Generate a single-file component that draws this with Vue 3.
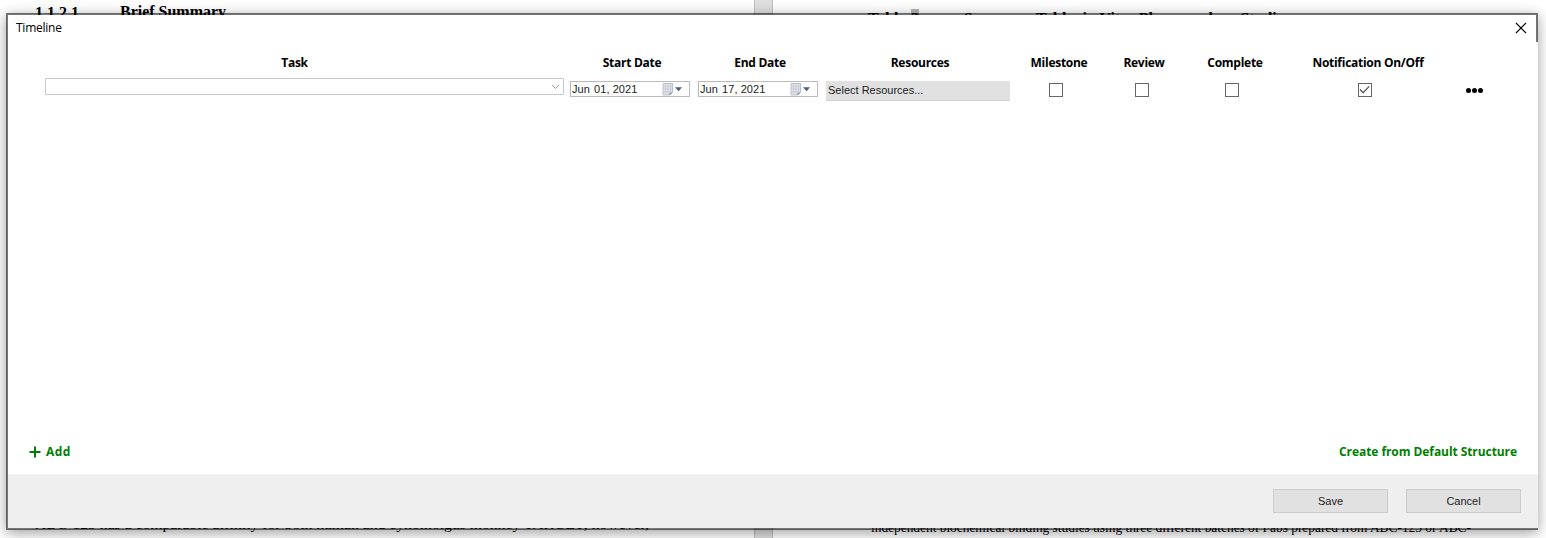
<script setup>
const columns = ['Task', 'Start Date', 'End Date', 'Resources', 'Milestone', 'Review', 'Complete', 'Notification On/Off']
const dates = [
  { month: 'Jun', rest: '01, 2021' },
  { month: 'Jun', rest: '17, 2021' },
]
const flags = [
  { name: 'milestone', on: false },
  { name: 'review', on: false },
  { name: 'complete', on: false },
  { name: 'notify', on: true },
]
</script>

<template>
  <div class="screen">
    <div class="page left">
      <div class="heading"><span class="num">1.1.2.1</span><svg class="fit" width="108" height="22"><text x="0" y="16" textLength="106" lengthAdjust="spacingAndGlyphs">Brief Summary</text></svg></div>
      <svg class="para" width="640" height="20"><text x="0" y="14" textLength="614" lengthAdjust="spacingAndGlyphs">ABC-123 has a comparable affinity for both human and cynomolgus monkey TARGET; however,</text></svg>
    </div>
    <div class="gap"></div>
    <div class="page right">
      <div class="caption"><span class="c1">Table</span><span class="mark">2</span><svg class="fit" width="330" height="22"><text x="0" y="16" textLength="64" lengthAdjust="spacingAndGlyphs">Summary</text><text x="72" y="16" textLength="254" lengthAdjust="spacingAndGlyphs">Table: in Vitro Pharmacology Studies</text></svg></div>
      <svg class="para" width="640" height="20"><text x="0" y="14" textLength="600" lengthAdjust="spacingAndGlyphs">independent biochemical binding studies using three different batches of Fabs prepared from ABC-123 or ABC-</text></svg>
    </div>

    <div class="dialog">
      <div class="titlebar">
        <span>Timeline</span>
        <svg width="12" height="12" viewBox="0 0 12 12"><path d="M1 1L11 11M11 1L1 11" stroke="#000" stroke-width="1.1" fill="none" /></svg>
      </div>
      <div class="body">
        <div class="head">
          <div v-for="c in columns" :key="c">{{ c }}</div>
        </div>
        <div class="row">
          <div class="combo">
            <svg width="9" height="6" viewBox="0 0 9 6"><path d="M1 1L4.5 4.5L8 1" stroke="#999" fill="none" /></svg>
          </div>
          <div v-for="d in dates" :key="d.rest" class="date">
            <span class="value"><span>{{ d.month }}</span><span>{{ d.rest }}</span></span>
            <svg width="22" height="13" viewBox="0 0 22 13">
              <path d="M1 .5H10.5V9.5L8 12H1Z" fill="#e2e5ea" stroke="#b7bdca" />
              <path d="M3.5 1V11.5M6 1V11.5M8.5 1V9M1 3.5H10M1 6H10M1 8.5H10" stroke="#c5cad6" stroke-width=".8" />
              <path d="M7.5 12V9.5H10.5Z" fill="#9299aa" />
              <path d="M13 4.2H20L16.5 8.2Z" fill="#4e5b88" />
            </svg>
          </div>
          <div class="picker">Select Resources...</div>
          <div v-for="f in flags" :key="f.name" class="cell" :class="f.name">
            <span class="check"><svg v-if="f.on" width="11" height="11" viewBox="0 0 11 11"><path d="M1 5.5L4.2 8.7L10.2 2.4" stroke="#444" stroke-width="1.1" fill="none" /></svg></span>
          </div>
          <div class="dots"><i></i><i></i><i></i></div>
        </div>
        <div class="actions">
          <span class="add"><svg width="12" height="12" viewBox="0 0 12 12"><path d="M6 .5V11.5M.5 6H11.5" stroke="#008000" stroke-width="2" /></svg>Add</span>
          <span class="create">Create from Default Structure</span>
        </div>
      </div>
      <div class="footer">
        <button>Save</button>
        <button>Cancel</button>
      </div>
      <div class="edge"></div>
    </div>
  </div>
</template>

<style>
html, body { overflow: hidden; }
</style>

<style scoped>
* { box-sizing: border-box; }
.screen { position: relative; width: 1546px; height: 538px; overflow: hidden; display: flex; background: #fff; }
.page { height: 538px; display: flex; flex-direction: column; justify-content: space-between; font: 14px "Liberation Serif", serif; }
.left { width: 754px; padding: 1px 0 3px 35px; }
.gap { width: 19px; background: #e0e0e0; border: solid #c0c0c0; border-width: 0 1px; }
.right { width: 773px; padding-left: 95px; }
.heading { display: flex; font-size: 16px; font-weight: bold; line-height: 22px; height: 22px; }
.heading .num { width: 85px; line-height: 23px; }
.fit { display: block; }
.caption { display: flex; height: 30px; padding-top: 8px; font-size: 16px; font-weight: bold; line-height: 22px; }
.caption .c1 { width: 43px; }
.mark { width: 8px; height: 18px; margin: 1px 45px 0 0; line-height: 20px; background: #b4b4b4; }
.right .para { margin-left: 3px; }
.para { display: block; }
.dialog {
  position: absolute; left: 6px; top: 13px; width: 1532px; height: 517px;
  border: 2px solid rgba(0, 0, 0, .53); border-right: 0; background: #fff; background-clip: padding-box;
  display: flex; flex-direction: column;
  box-shadow: 0 3px 13px 0 rgba(0, 0, 0, .38);
}
.edge { position: absolute; right: 0; top: 0; width: 2px; height: 27px; background: #707070; }
.titlebar { height: 27px; padding: 0 11px 2px 8px; display: flex; align-items: center; justify-content: space-between; font: 12px/16px "Open Sans", sans-serif; letter-spacing: -.25px; color: #000; }
.body { flex: 1; display: flex; flex-direction: column; font-family: "Open Sans", sans-serif; }
.head { display: grid; grid-template-columns: 519px 156px 100px 220px 58px 112px 70px 196px; margin: 12px 0 0 27px; height: 19px; line-height: 18px; font-size: 12px; font-weight: bold; letter-spacing: -.27px; text-align: center; white-space: nowrap; color: #000; }
.row { display: flex; align-items: flex-start; margin-left: 37px; height: 30px; padding-top: 5px; font: 11px "Liberation Sans", sans-serif; color: #222; }
.combo { width: 519px; height: 17px; margin-right: 6px; border: 1px solid #c8c8c8; border-radius: 1px; display: flex; justify-content: flex-end; align-items: center; padding-right: 3px; }
.date { width: 120px; height: 16px; margin: 3px 8px 0 0; border: 1px solid #bbb; display: flex; align-items: center; justify-content: space-between; padding: 0 5px 0 1px; }
.value { display: flex; gap: 4px; letter-spacing: .08px; }
.picker { width: 184px; height: 20px; line-height: 19px; padding-left: 2px; margin: 3px 39px 0 0; background: #e1e1e1; border-bottom: 1px solid #d0d0d0; }
.check { display: block; width: 14px; height: 14px; border: 1px solid #666; background: #fff; }
.check svg { display: block; }
.cell { padding-top: 5px; }
.milestone { margin-right: 72px; }
.review { margin-right: 76px; }
.complete { margin-right: 119px; }
.notify { margin-right: 94px; }
.dots { display: flex; gap: 1px; padding-top: 10px; }
.dots i { width: 5px; height: 5px; border-radius: 50%; background: #000; }
.actions { margin-top: auto; padding: 0 21px 13px; display: flex; justify-content: space-between; font-size: 12px; line-height: 18px; font-weight: bold; color: #008000; }
.add { display: flex; align-items: center; gap: 5px; letter-spacing: .4px; }
.create { letter-spacing: -.07px; }
.footer { height: 54px; background: #efefef; border-top: 1px solid #f5f5f5; display: flex; justify-content: flex-end; gap: 18px; padding: 14px 17px 0 0; }
button { width: 115px; height: 24px; border: 1px solid #ccc; background: #e1e1e1; font: 11px "Liberation Sans", sans-serif; color: #222; padding: 0; }
</style>
